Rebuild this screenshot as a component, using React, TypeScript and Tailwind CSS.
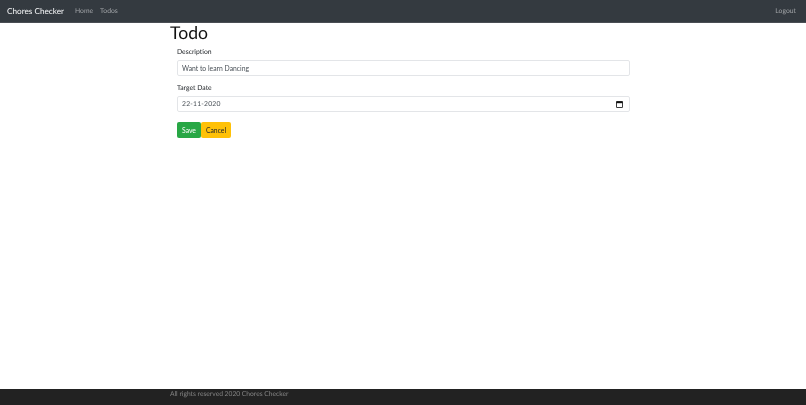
import React from 'react';

const FONT = "font-['Lato','Roboto',sans-serif] [text-rendering:geometricPrecision]";

function Field({ label, children }: { label: string; children: React.ReactNode }) {
  return (
    <div className="mb-[5px] flex flex-col">
      <label className="text-[6.8px] leading-[12px] mt-[1px] mb-[2px] text-[#212529]">{label}</label>
      {children}
    </div>
  );
}

export default function App() {
  return (
    <div className="h-[405px] w-[806px] overflow-hidden bg-white">
      <div className={`${FONT} h-full flex flex-col [will-change:transform]`}>
        <nav className="h-[23px] shrink-0 bg-[#343a40] border-b border-[#4a4e54] flex items-center pl-[7px] pr-[10px]">
          <a className="text-[8.2px] text-[#f8f9fa] mr-[11px]">Chores Checker</a>
          <a className="text-[6.8px] text-[#a0a3a6] mr-[7px]">Home</a>
          <a className="text-[6.8px] text-[#a0a3a6]">Todos</a>
          <a className="ml-auto text-[6.8px] text-[#a0a3a6]">Logout</a>
        </nav>

        <main className="flex-1 w-[466px] ml-[170px]">
          <h1 className="text-[17.6px] leading-[20px] text-[#111] mb-[2px]">Todo</h1>
          <form className="ml-[7px] w-[453px]">
            <Field label="Description">
              <input
                readOnly
                value="Want to learn Dancing"
                className="h-[16px] border border-[#e3e5e8] rounded-[2px] pl-[4px] pr-[5px] text-[6.8px] text-[#495057] outline-none"
              />
            </Field>
            <Field label="Target Date">
              <div className="h-[16px] border border-[#e3e5e8] rounded-[2px] pl-[4px] pr-[6px] flex items-center justify-between text-[6.8px] text-[#495057]">
                <span className="tracking-[0.2px]">22-11-2020</span>
                <svg width="7" height="7" viewBox="0 0 8 8" aria-hidden="true">
                  <rect x="0.5" y="0.5" width="7" height="7" rx="0.5" fill="none" stroke="#111" />
                  <rect x="0.5" y="0.5" width="7" height="2" fill="#111" />
                </svg>
              </div>
            </Field>
            <div className="flex mt-[10px]">
              <button type="button" className="h-[16px] w-[24px] rounded-[2px] bg-[#28a745] text-white text-[6.8px] leading-none">
                Save
              </button>
              <button type="button" className="h-[16px] w-[30px] rounded-[2px] bg-[#ffc107] text-[#212529] text-[6.8px] leading-none">
                Cancel
              </button>
            </div>
          </form>
        </main>

        <footer className="h-[16px] shrink-0 bg-[#222222] pl-[170px] text-[6.7px] leading-[11px] text-[#858585]">
          All rights reserved 2020 Chores Checker
        </footer>
      </div>
    </div>
  );
}
